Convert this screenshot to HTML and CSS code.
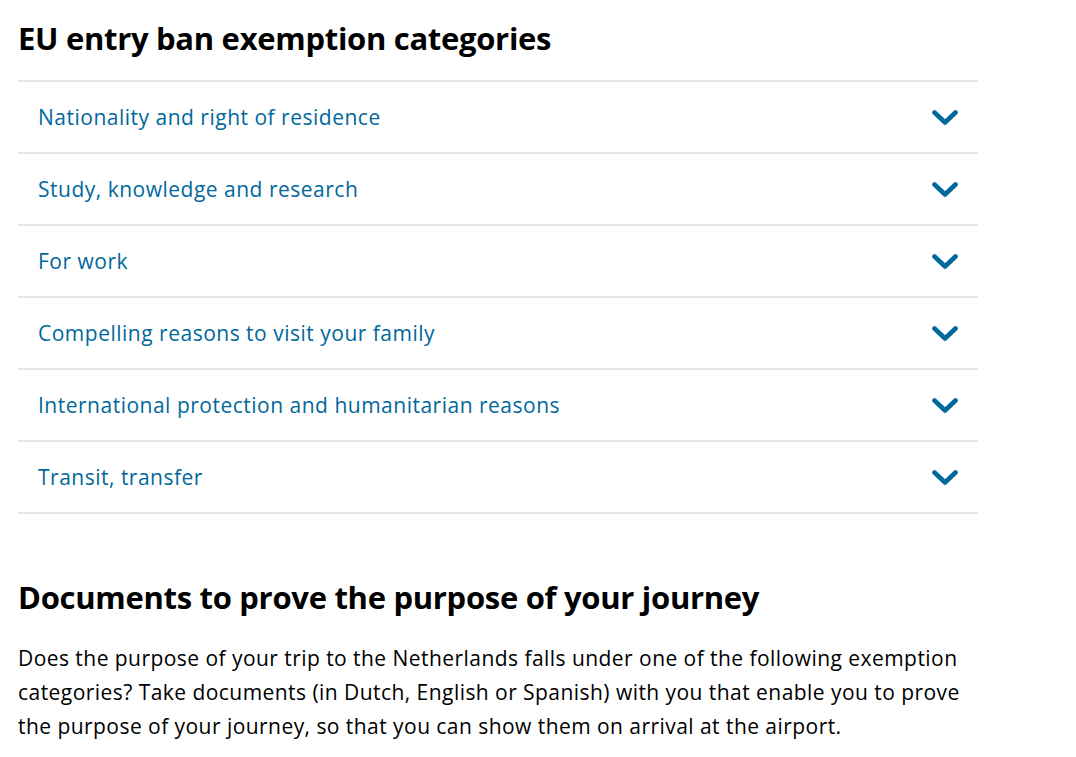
FILE: index.html
```html
<!DOCTYPE html>
<html lang="en">
<head>
<meta charset="utf-8">
<title>EU entry ban exemption categories</title>
<link rel="stylesheet" href="styles.css">
</head>
<body>
<main class="page">
  <h2 class="title">EU entry ban exemption categories</h2>
  <ul class="accordion">
    <li class="item"><a class="item-link" href="#"><span>Nationality and right of residence</span><svg class="chev" viewBox="0 0 26 16"><path d="M2.5 2.5 L13 12.5 L23.5 2.5"/></svg></a></li>
    <li class="item"><a class="item-link" href="#"><span>Study, knowledge and research</span><svg class="chev" viewBox="0 0 26 16"><path d="M2.5 2.5 L13 12.5 L23.5 2.5"/></svg></a></li>
    <li class="item"><a class="item-link" href="#"><span>For work</span><svg class="chev" viewBox="0 0 26 16"><path d="M2.5 2.5 L13 12.5 L23.5 2.5"/></svg></a></li>
    <li class="item"><a class="item-link" href="#"><span>Compelling reasons to visit your family</span><svg class="chev" viewBox="0 0 26 16"><path d="M2.5 2.5 L13 12.5 L23.5 2.5"/></svg></a></li>
    <li class="item"><a class="item-link" href="#"><span>International protection and humanitarian reasons</span><svg class="chev" viewBox="0 0 26 16"><path d="M2.5 2.5 L13 12.5 L23.5 2.5"/></svg></a></li>
    <li class="item"><a class="item-link" href="#"><span>Transit, transfer</span><svg class="chev" viewBox="0 0 26 16"><path d="M2.5 2.5 L13 12.5 L23.5 2.5"/></svg></a></li>
  </ul>
  <h2 class="title second">Documents to prove the purpose of your journey</h2>
  <p class="text">Does the purpose of your trip to the Netherlands falls under one of the following exemption categories? Take documents (in Dutch, English or Spanish) with you that enable you to prove the purpose of your journey, so that you can show them on arrival at the airport.</p>
</main>
</body>
</html>
```

FILE: styles.css
```css
html, body {
  margin: 0;
  padding: 0;
  background: #ffffff;
}
body {
  font-family: "Open Sans", "Noto Sans", sans-serif;
  color: #000000;
}
.page {
  width: 960px;
  padding: 0 0 0 18px;
}
.title {
  margin: 0;
  font-size: 31px;
  line-height: 40px;
  font-weight: 700;
  letter-spacing: -0.3px;
  padding-top: 18px;
  padding-bottom: 22px;
}
.accordion {
  list-style: none;
  margin: 0;
  padding: 0;
  border-top: 2px solid #e6e6e6;
}
.item {
  border-bottom: 2px solid #e6e6e6;
}
.item-link {
  display: flex;
  align-items: center;
  justify-content: space-between;
  height: 70px;
  padding: 0 20px 0 20px;
  color: #01689b;
  text-decoration: none;
  font-size: 21px;
  letter-spacing: 0.5px;
}
.chev {
  width: 26px;
  height: 16px;
  margin-top: 1px;
  fill: none;
  stroke: #01689b;
  stroke-width: 4.6;
  stroke-linecap: round;
  stroke-linejoin: round;
}
.second {
  padding-top: 63px;
  padding-bottom: 24px;
}
.text {
  margin: 0;
  font-size: 21px;
  line-height: 34px;
  letter-spacing: 0.45px;
}
```
